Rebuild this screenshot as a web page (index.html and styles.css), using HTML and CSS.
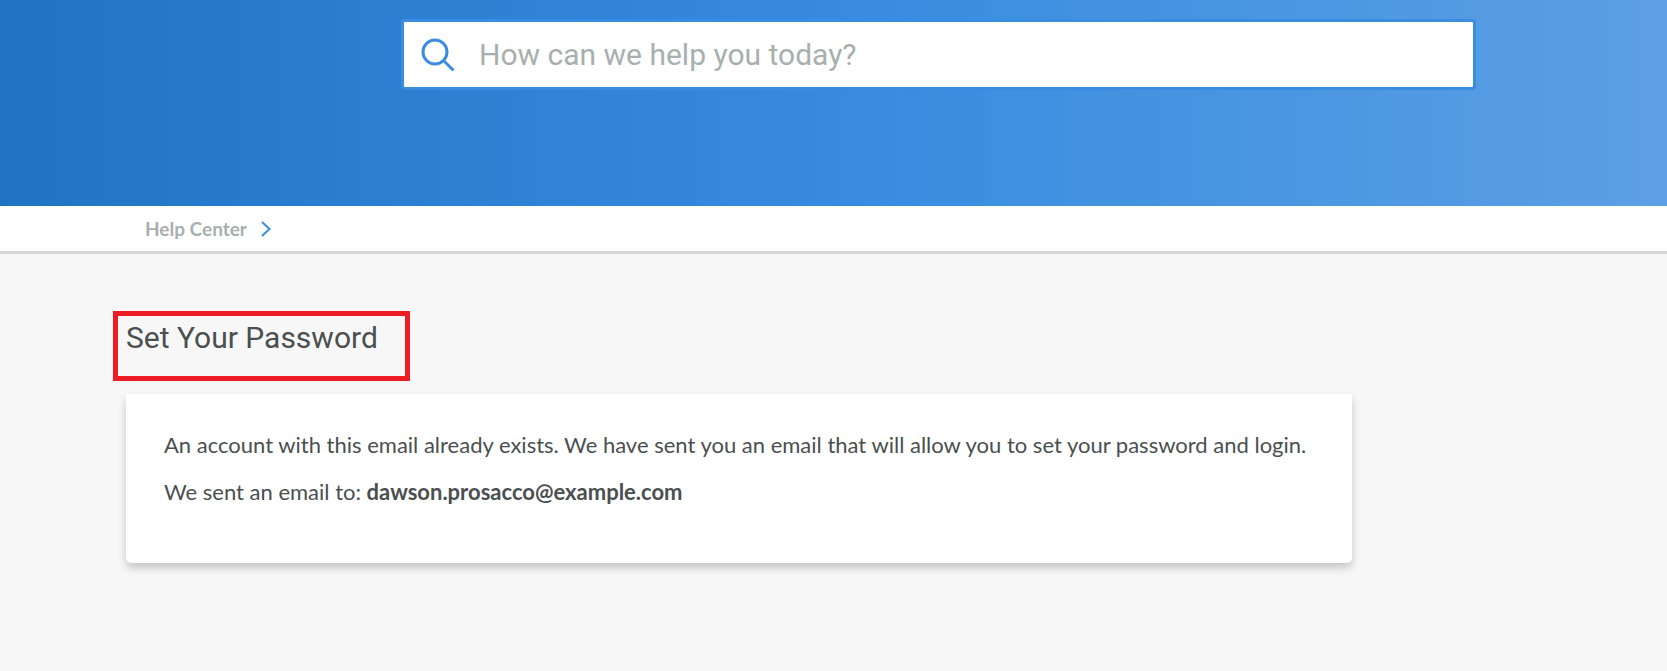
FILE: index.html
```html
<!DOCTYPE html>
<html lang="en">
<head>
<meta charset="utf-8">
<meta name="viewport" content="width=device-width, initial-scale=1">
<title>Set Your Password - Help Center</title>
<link rel="stylesheet" href="styles.css">
</head>
<body>
<header class="hero">
  <form class="search" role="search">
    <label class="search-label" for="query" aria-label="Search">
      <svg class="search-icon" viewBox="0 0 34 34" aria-hidden="true">
        <circle cx="14" cy="14" r="12"/>
        <path d="M22.5 22.5 32.500 32.500"/>
      </svg>
    </label>
    <input class="search-input" id="query" type="text" placeholder="How can we help you today?">
  </form>
</header>
<nav class="breadcrumb" aria-label="Breadcrumb">
  <a class="breadcrumb-link" href="#">Help Center</a>
  <svg class="breadcrumb-arrow" viewBox="0 0 12 16" aria-hidden="true"><path d="M2 1 9.500 8 2 15"/></svg>
</nav>
<main class="content">
  <div class="title-frame">
    <h1 class="title">Set Your Password</h1>
  </div>
  <section class="card">
    <p class="card-text">An account with this email already exists. We have sent you an email that will allow you to set your password and login.</p>
    <p class="card-text">We sent an email to: <strong>dawson.prosacco@example.com</strong></p>
  </section>
</main>
</body>
</html>
```
FILE: styles.css
```css
* {
  box-sizing: border-box;
}

body {
  margin: 0;
  min-height: 100vh;
  background: #f7f7f7;
  color: #4a4f4f;
  font-family: Lato, "Open Sans", sans-serif;
}

.hero {
  padding: 19px 191px 116px 401px;
  background: linear-gradient(90deg, #2174c4 0%, #388bdf 52%, #3c8fe0 58%, #5c9fe4 100%);
}

.search {
  display: flex;
  align-items: center;
  border: 3px solid #398cdf;
  border-radius: 4px;
  background: #fff;
}

.search-label {
  display: flex;
  padding: 0 24px 0 17px;
}

.search-icon {
  width: 34px;
  height: 34px;
  fill: none;
  stroke: #3a8dde;
  stroke-width: 3;
}

.search-input {
  flex: 1;
  min-width: 0;
  height: 65px;
  padding: 0;
  border: 0;
  outline: 0;
  background: transparent;
  color: #4a4f4f;
  font-family: Roboto, sans-serif;
  font-size: 30px;
}

.search-input::placeholder {
  color: #a8b0ae;
  opacity: 1;
}

.breadcrumb {
  display: flex;
  align-items: center;
  gap: 13px;
  padding: 11px 145px 10px;
  border-bottom: 3px solid #d2d6d4;
  background: #fff;
}

.breadcrumb-link {
  color: #a8b0ae;
  font-size: 19px;
  font-weight: 700;
  line-height: 24px;
  text-decoration: none;
}

.breadcrumb-arrow {
  width: 12px;
  height: 16px;
  fill: none;
  stroke: #3a8dde;
  stroke-width: 2;
}

.content {
  padding: 57px 315px 57px 113px;
}

.title-frame {
  width: fit-content;
  padding: 4px 27px 21px 8px;
  border: 5px solid #ee1c23;
}

.title {
  margin: 0;
  font-family: Roboto, sans-serif;
  font-size: 30px;
  font-weight: 400;
  line-height: 35px;
}

.card {
  margin: 13px 0 0 13px;
  padding: 35px 36px 40px 38px;
  border-radius: 0 0 5px 5px;
  background: #fff;
  box-shadow: 0 5px 8px rgba(0, 0, 0, 0.2);
}

.card-text {
  margin: 0 0 15px;
  font-size: 22px;
  line-height: 32px;
}

.card-text:last-child {
  margin-bottom: 15px;
}
```
